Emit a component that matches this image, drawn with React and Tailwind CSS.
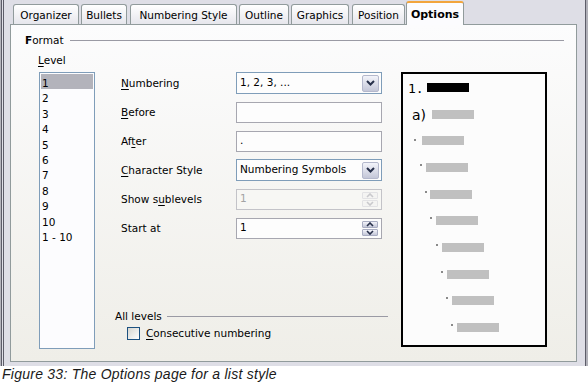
import React from "react";

const UI = { fontFamily: '"DejaVu Sans", "Noto Sans", sans-serif' };

function DropBtn() {
  return (
    <div className="w-[17px] h-[17px] rounded-[2px] border border-[#b4b8cc] bg-gradient-to-b from-[#f3f4fa] to-[#c4c7d8] flex items-center justify-center">
      <svg width="9" height="6" viewBox="0 0 9 6">
        <path d="M1 1 L4.5 4.5 L8 1" fill="none" stroke="#27304a" strokeWidth="2" />
      </svg>
    </div>
  );
}

function Spin({ disabled }) {
  const c = disabled ? "#c9c9cc" : "#27304a";
  const box = disabled
    ? "h-[7px] w-[16px] rounded-[1px] border border-[#e2e2e4] bg-[#f4f4f2] flex items-center justify-center"
    : "h-[7px] w-[16px] rounded-[1px] border border-[#a9adc2] bg-gradient-to-b from-[#f3f4fa] to-[#c4c7d8] flex items-center justify-center";
  return (
    <div className="flex flex-col gap-[1px]">
      <div className={box}>
        <svg width="8" height="5" viewBox="0 0 8 5">
          <path d="M1 4 L4 1 L7 4" fill="none" stroke={c} strokeWidth="1.6" />
        </svg>
      </div>
      <div className={box}>
        <svg width="8" height="5" viewBox="0 0 8 5">
          <path d="M1 1 L4 4 L7 1" fill="none" stroke={c} strokeWidth="1.6" />
        </svg>
      </div>
    </div>
  );
}

function Tab({ label, w, ml, active }) {
  if (active) {
    return (
      <div
        className={`${ml} ${w} h-[24px] mb-[-1px] relative z-10 rounded-t-[3px] border-x border-[#919b9c] border-t-2 border-t-[#f2a53c] bg-[#fcfcfe] flex items-start justify-center pt-[5px] font-bold text-[11px] leading-[13px] text-black`}
      >
        {label}
      </div>
    );
  }
  return (
    <div
      className={`${ml} ${w} h-[20px] rounded-t-[3px] border border-b-0 border-[#919b9c] bg-gradient-to-b from-[#ffffff] to-[#e6e6ec] flex items-center justify-center pt-[1px] text-[10.5px] leading-[13px] text-black`}
    >
      {label}
    </div>
  );
}

function Row({ label, children }) {
  return (
    <div className="flex items-center h-[22px] pl-[6px]">
      <div className="w-[115px] text-[10.5px] leading-[13px] text-black">{label}</div>
      {children}
    </div>
  );
}

const U = ({ children }) => <span className="underline underline-offset-[2px]">{children}</span>;

export default function App() {
  const levels = ["1", "2", "3", "4", "5", "6", "7", "8", "9", "10", "1 - 10"];
  const bullets = [
    [11, 65, 19, 62],
    [17, 90, 23, 89],
    [22, 117, 27, 116],
    [27, 143, 33, 142],
    [33, 170, 39, 169],
    [38, 197, 44, 196],
    [43, 223, 49, 222],
    [48, 250, 54, 249],
  ];
  return (
    <div className="w-[588px] h-[389px] bg-white overflow-hidden" style={UI}>
      <div className="h-[366px] bg-[#dedee6] flex flex-col pl-[10px] pr-[11px] pb-[4px] shadow-[inset_1px_0_0_#b4b4bc,inset_2px_0_0_#5c5c68,inset_3px_0_0_#dedee6,inset_4px_0_0_#5c5c68,inset_-2px_0_0_#b0b0b8,inset_-3px_0_0_#5c5c68]">
        {/* Tabs */}
        <div className="h-[24px] flex items-end shrink-0">
          <Tab label="Organizer" w="w-[66px]" ml="ml-[3px]" />
          <Tab label="Bullets" w="w-[46px]" ml="ml-[2px]" />
          <Tab label="Numbering Style" w="w-[107px]" ml="ml-[3px]" />
          <Tab label="Outline" w="w-[50px]" ml="ml-[2px]" />
          <Tab label="Graphics" w="w-[58px]" ml="ml-[2px]" />
          <Tab label="Position" w="w-[53px]" ml="ml-[3px]" />
          <Tab label="Options" w="w-[58px]" ml="ml-[1px]" active />
        </div>

        {/* Panel */}
        <div className="flex-1 border border-[#919b9c] bg-gradient-to-b from-[#fcfcfd] to-[#efeee8] pt-[9px] pl-[14px] pr-[12px] flex flex-col text-black">
          <div className="flex items-center h-[13px]">
            <span className="text-[10.5px] leading-[13px]">
              <span className="font-bold">F</span>ormat
            </span>
            <div className="flex-1 h-px bg-[#9a9aa4] ml-[6px]" />
          </div>
          <div className="mt-[7px] pl-[13px] text-[10.5px] leading-[13px] h-[13px]">
            <U>L</U>evel
          </div>

          <div className="mt-[5px] flex pl-[14px]">
            {/* Listbox */}
            <div className="w-[56px] h-[277px] border border-[#7f9db9] bg-[#fcfcfe] p-[1px] text-[10.5px]">
              {levels.map((l, i) => (
                <div
                  key={l}
                  className={
                    i === 0
                      ? "h-[15.4px] leading-[19px] pl-[1px] bg-[#b3b3bb] overflow-visible whitespace-nowrap"
                      : "h-[15.4px] leading-[19px] pl-[1px] overflow-visible whitespace-nowrap"
                  }
                >
                  {l}
                </div>
              ))}
            </div>

            {/* Form column */}
            <div className="ml-[20px] w-[273px] h-[277px] flex flex-col">
              <div className="flex flex-col gap-[7px]">
                <Row label={<><U>N</U>umbering</>}>
                  <div className="w-[146px] h-[22px] border border-[#7f9db9] bg-[#fdfdfd] flex items-center justify-between pl-[3px] pr-[2px]">
                    <span className="text-[10.5px]">1, 2, 3, ...</span>
                    <DropBtn />
                  </div>
                </Row>
                <Row label={<><U>B</U>efore</>}>
                  <div className="w-[146px] h-[21px] border border-[#a7a7b0] bg-[#fdfdfd]" />
                </Row>
                <Row label={<>Af<U>t</U>er</>}>
                  <div className="w-[146px] h-[21px] border border-[#a7a7b0] bg-[#fdfdfd] flex items-center pl-[3px] text-[10.5px]">
                    .
                  </div>
                </Row>
                <Row label={<><U>C</U>haracter Style</>}>
                  <div className="w-[146px] h-[22px] border border-[#7f9db9] bg-[#fdfdfd] flex items-center justify-between pl-[3px] pr-[2px]">
                    <span className="text-[10.5px]">Numbering Symbols</span>
                    <DropBtn />
                  </div>
                </Row>
                <Row label={<>Show s<U>u</U>blevels</>}>
                  <div className="w-[146px] h-[21px] border border-[#c3c3c8] bg-[#f7f7f4] flex items-center justify-between pl-[3px] pr-[3px]">
                    <span className="text-[10.5px] text-[#a3a3a3]">1</span>
                    <Spin disabled />
                  </div>
                </Row>
                <Row label="Start at">
                  <div className="w-[146px] h-[21px] border border-[#a7a7b0] bg-[#fdfdfd] flex items-center justify-between pl-[3px] pr-[3px]">
                    <span className="text-[10.5px]">1</span>
                    <Spin />
                  </div>
                </Row>
              </div>

              <div className="mt-auto pb-[8px]">
                <div className="flex items-center h-[13px]">
                  <span className="text-[10.5px] leading-[13px]">All levels</span>
                  <div className="flex-1 h-px bg-[#9a9aa4] ml-[5px]" />
                </div>
                <div className="mt-[3px] h-[15px] flex items-center pl-[12px]">
                  <div className="w-[13px] h-[13px] border border-[#1c5180] bg-gradient-to-br from-[#d6d6d0] to-[#ffffff]" />
                  <span className="ml-[6px] text-[10.5px] leading-[13px]">
                    <U>C</U>onsecutive numbering
                  </span>
                </div>
              </div>
            </div>

            {/* Preview */}
            <div className="ml-[13px] w-[146px] h-[275px] border-2 border-black bg-[#fcfcfc]">
              <svg width="142" height="271" viewBox="0 0 142 271">
                <text x="5" y="19" fontSize="13" fontFamily="DejaVu Sans Mono, monospace" fill="#000">1.</text>
                <rect x="24" y="9" width="42" height="9" fill="#000" />
                <text x="9" y="46" fontSize="14" fontFamily="DejaVu Sans, sans-serif" fill="#000">a)</text>
                <rect x="29" y="36" width="42" height="9" fill="#c0c0c0" />
                {bullets.map(([dx, dy, bx, by], i) => (
                  <g key={i}>
                    <rect x={dx} y={dy} width="2" height="2" fill="#8a8a8a" />
                    <rect x={bx} y={by} width="42" height="9" fill="#c0c0c0" />
                  </g>
                ))}
              </svg>
            </div>
          </div>
        </div>
      </div>
      <div
        className="pl-[2px] h-[16px] text-[14px] leading-[16px] italic tracking-[0.25px] text-[#1a1a1a]"
        style={{ fontFamily: '"Liberation Sans", Arial, sans-serif' }}
      >
        Figure 33: The Options page for a list style
      </div>
    </div>
  );
}
